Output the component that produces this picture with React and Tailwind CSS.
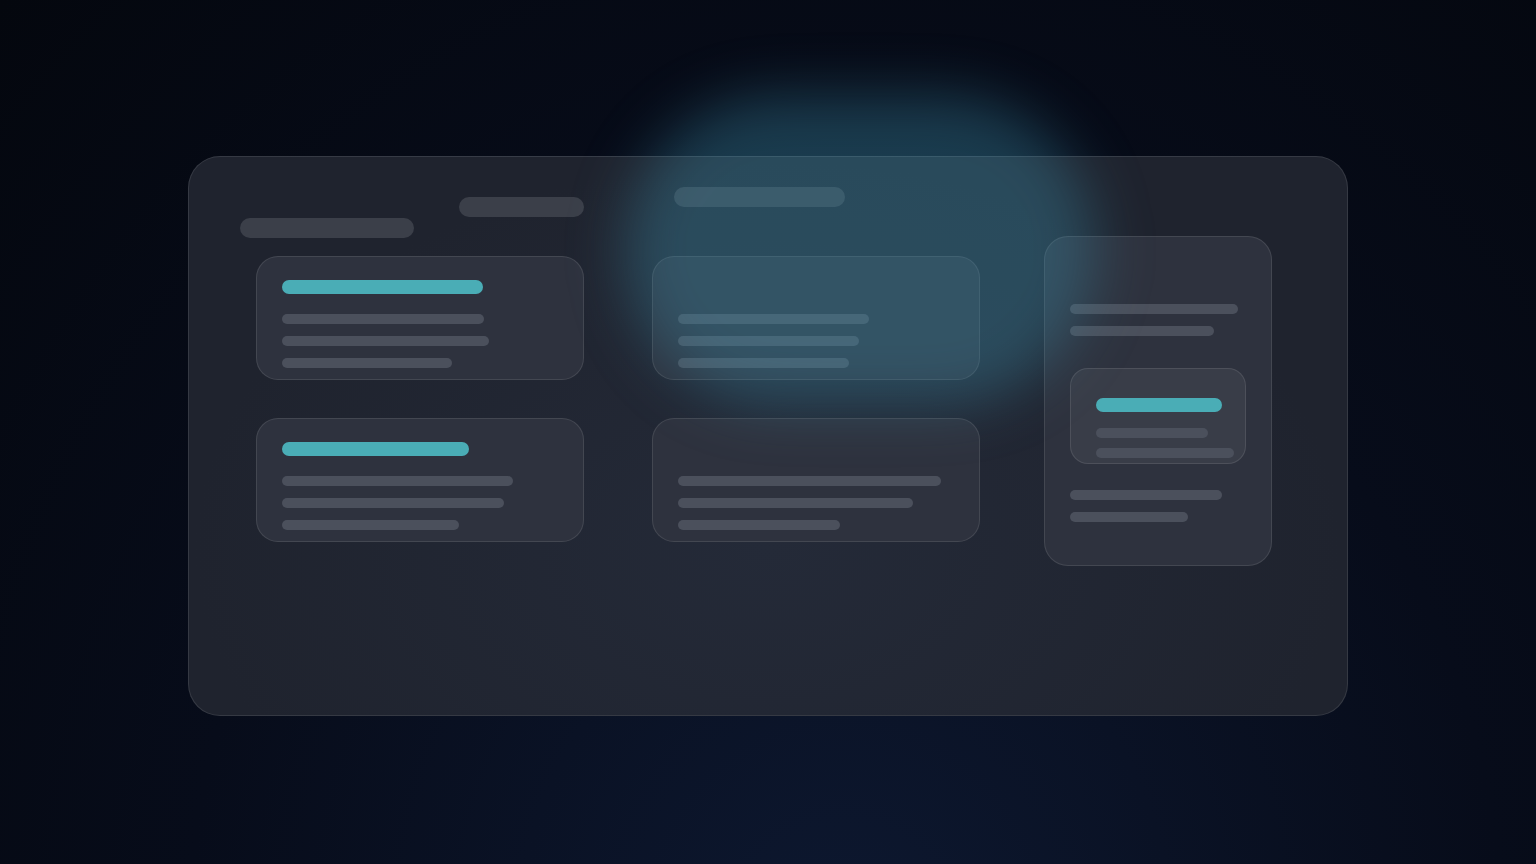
import React from 'react';

const Bar = ({ w, mt = '' }) => (
  <div className={`h-[10px] rounded-full bg-[#4b505c] ${mt}`} style={{ width: w }} />
);

const Card = ({ teal, lines }) => (
  <div className="h-[124px] w-[328px] rounded-[22px] border border-white/10 bg-[#2e323e] pl-[25px] pt-[23px]">
    <div className="h-[14px]">
      {teal && <div className="h-[14px] rounded-full bg-[#4aadb6]" style={{ width: teal }} />}
    </div>
    <div className="mt-[20px] flex flex-col gap-[12px]">
      {lines.map((w, i) => (
        <Bar key={i} w={w} />
      ))}
    </div>
  </div>
);

export default function App() {
  return (
    <div className="relative h-[864px] w-full overflow-hidden bg-[radial-gradient(ellipse_at_55%_110%,#0d1830_0%,#070c1a_55%,#04070e_100%)]">
      <div className="flex justify-center pt-[156px]">
        {/* main panel */}
        <div className="flex h-[560px] w-[1160px] rounded-[32px] border border-white/10 bg-[radial-gradient(ellipse_at_50%_70%,#242a38_0%,#1f232e_70%)] pl-[51px]">
          <div className="flex flex-col">
            {/* header pills */}
            <div className="flex h-[99px] items-start">
              <div className="mt-[61px] h-[20px] w-[174px] rounded-full bg-[#3b3f49]" />
              <div className="ml-[45px] mt-[40px] h-[20px] w-[125px] rounded-full bg-[#3b3f49]" />
              <div className="ml-[90px] mt-[30px] h-[20px] w-[171px] rounded-full bg-[#3b3f49]" />
            </div>
            <div className="ml-[16px] grid grid-cols-[328px_328px] gap-x-[68px] gap-y-[38px]">
              <Card teal={201} lines={[202, 207, 170]} />
              <Card lines={[191, 181, 171]} />
              <Card teal={187} lines={[231, 222, 177]} />
              <Card lines={[263, 235, 162]} />
            </div>
          </div>

          {/* right column */}
          <div className="ml-[64px] mt-[79px] h-[330px] w-[228px] rounded-[24px] border border-white/10 bg-[#2e323e] pl-[25px] pt-[67px]">
            <div className="flex flex-col gap-[12px]">
              <Bar w={168} />
              <Bar w={144} />
            </div>
            <div className="mt-[32px] h-[96px] w-[176px] rounded-[18px] border border-white/10 bg-[#393d48] pl-[25px] pt-[29px]">
              <div className="h-[14px] w-[126px] rounded-full bg-[#4aadb6]" />
              <Bar w={112} mt="mt-[16px]" />
              <Bar w={138} mt="mt-[10px]" />
            </div>
            <div className="mt-[26px] flex flex-col gap-[12px]">
              <Bar w={152} />
              <Bar w={118} />
            </div>
          </div>
        </div>
      </div>

      {/* teal glow */}
      <div className="pointer-events-none absolute left-[625px] top-[95px] h-[310px] w-[470px] rounded-full bg-[rgba(62,145,172,0.36)] blur-[28px]" />
    </div>
  );
}
